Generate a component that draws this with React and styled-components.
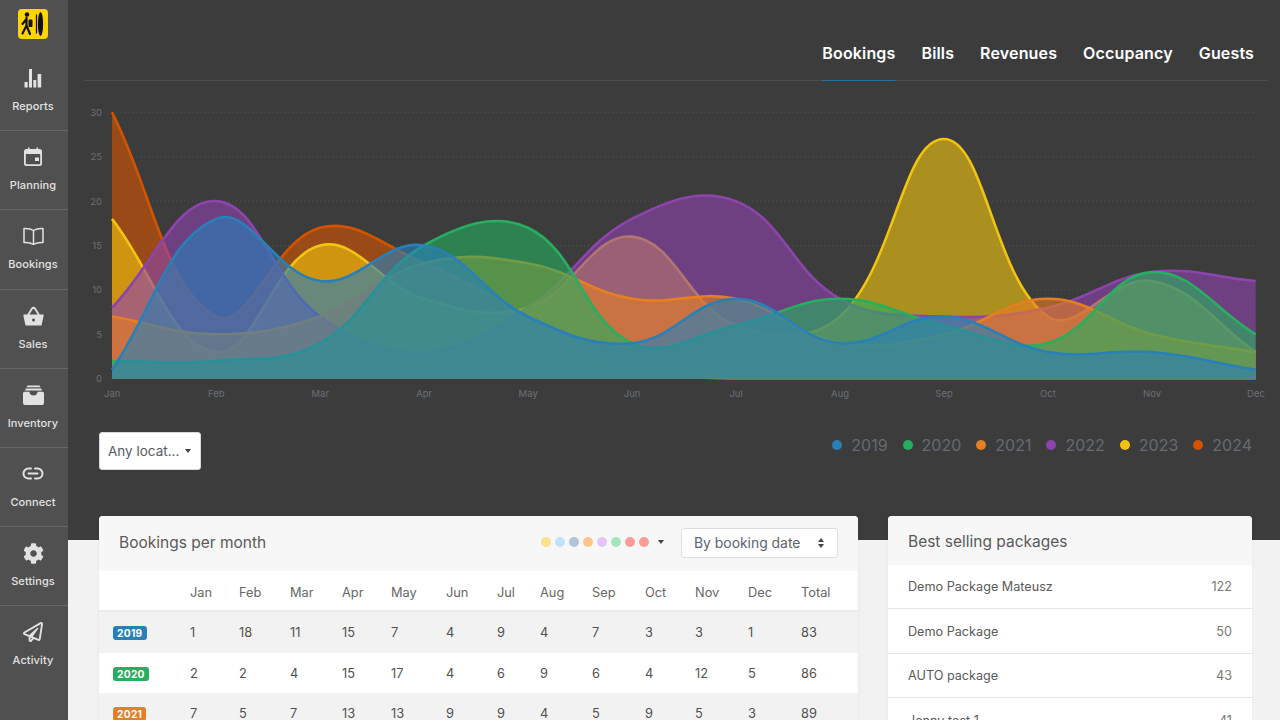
import React from 'react';
import styled, { createGlobalStyle } from 'styled-components';
import { FaCog, FaRegPaperPlane } from 'react-icons/fa';

const Global = createGlobalStyle`
  html, body { margin: 0; padding: 0; height: 720px; overflow: hidden; background: #f2f2f2; }
  body { font-family: Inter, "Liberation Sans", sans-serif; }
  * { box-sizing: border-box; }
`;

const Page = styled.div`display: flex; width: 1280px; height: 720px; overflow: hidden;`;
const Sidebar = styled.nav`width: 68px; flex: none; background: #505050; display: flex; flex-direction: column;`;
const LogoBox = styled.div`height: 52px; display: flex; justify-content: center; padding: 9px 2px 0 0;`;
const NavItem = styled.a`
  height: 79.2px; display: flex; flex-direction: column; align-items: center; padding: 16px 2px 0 0;
  border-bottom: ${p => (p.$last ? 'none' : '1px solid #666')}; color: #e2e2e2; flex: none;
`;
const NavIcon = styled.span`height: 20px; display: flex; align-items: center; justify-content: center; color: #e2e2e2;`;
const NavLabel = styled.span`font-size: 11px; font-weight: 500; margin-top: 11px; line-height: 14px; letter-spacing: 0.1px;`;

const Main = styled.main`flex: 1; min-width: 0; background: linear-gradient(#3c3c3c 540px, #f2f2f2 540px);`;
const TabBar = styled.div`
  height: 81px; margin: 0 12px 0 16px; display: flex; justify-content: flex-end; align-items: stretch; gap: 26px;
  padding-right: 14px; border-bottom: 1px solid #4e4e4e;
`;
const Tab = styled.a`
  display: flex; align-items: center; padding-top: 25px; height: 81px; font-size: 16px; font-weight: 600; color: #fff; letter-spacing: 0.15px;
  border-bottom: 1px solid ${p => (p.$active ? '#2473a8' : 'transparent')};
`;
const ChartSvg = styled.svg`display: block; width: 1212px; height: 330px;`;
const AxisText = styled.text`font-size: 9.5px; fill: #6b7078; font-family: Inter, "Liberation Sans", sans-serif;`;

const Controls = styled.div`height: 105px; padding: 21px 28px 0 31px; display: flex; justify-content: space-between; align-items: flex-start;`;
const LocationButton = styled.button`
  width: 102px; height: 38px; background: #fff; border: 1px solid #d5d9e0; border-radius: 3px; padding: 0 0 1px 8px;
  display: flex; align-items: center; font: 400 13.5px Inter, "Liberation Sans", sans-serif; color: #555b63;
`;
const Caret = styled.span`
  width: 0; height: 0; border-left: 3.5px solid transparent; border-right: 3.5px solid transparent; border-top: 4px solid ${p => p.$c || '#444'};
  margin-left: ${p => p.$ml || 0}px; flex: none;
`;
const Legend = styled.div`display: flex; align-items: center; height: 26px;`;
const LegendItem = styled.div`display: flex; align-items: center; margin-left: 15px; font-size: 16px; color: #656b73;`;
const LegendDot = styled.span`width: 10px; height: 10px; border-radius: 50%; background: ${p => p.$c}; margin-right: 9px;`;

const Cards = styled.div`display: flex; align-items: flex-start; padding-left: 31px; gap: 30px;`;
const Card = styled.section`
  width: ${p => p.$w}px; flex: none; background: #fff; border-radius: 4px; overflow: hidden; box-shadow: 0 1px 4px rgba(0,0,0,.05);
`;
const CardHead = styled.header`
  height: ${p => p.$h}px; background: #f7f7f7; display: flex; align-items: center; justify-content: space-between;
  padding: ${p => p.$pt || 0}px 20px ${p => p.$pb || 0}px;
`;
const CardTitle = styled.h3`margin: 0; font-size: 15.5px; font-weight: 400; color: #5a5a5a;`;
const HeadTools = styled.div`display: flex; align-items: center;`;
const Swatches = styled.div`display: flex; align-items: center; gap: 4px; margin-right: 17px;`;
const Swatch = styled.span`width: 10px; height: 10px; border-radius: 50%; background: ${p => p.$c};`;
const SortSelect = styled.div`
  width: 157px; height: 30px; margin-top: 2px; border: 1px solid #dbe0e7; border-radius: 3px; background: #fff; display: flex; align-items: center; justify-content: space-between;
  padding: 0 13px 0 12px; font-size: 13.9px; color: #5b636e;
`;
const Updown = styled.span`display: flex; flex-direction: column; gap: 2px;`;
const CaretUp = styled.span`width: 0; height: 0; border-left: 3.5px solid transparent; border-right: 3.5px solid transparent; border-bottom: 4px solid #444;`;

const MonthGrid = styled.div`
  display: grid; grid-template-columns: 91px 49px 51px 52px 49px 55px 51px 43px 52px 53px 50px 53px 53px 57px; align-items: center;
  height: ${p => p.$h}px; font-size: 12.8px; color: ${p => (p.$head ? '#666' : '#505050')};
  background: ${p => (p.$odd ? '#f2f2f2' : '#fff')};
  padding-top: ${p => (p.$head ? 3 : 0)}px;
  border-bottom: ${p => (p.$head ? '2px solid #ececec' : 'none')};
`;
const YearCell = styled.div`padding: 1px 0 0 14px; display: flex;`;
const YearBadge = styled.span`
  background: ${p => p.$c}; color: #fff; font-size: 10.2px; font-weight: 700; line-height: 14px; height: 14px; padding: 0 4px; border-radius: 3px; letter-spacing: 0.3px;
`;
const PkgRow = styled.div`
  height: ${p => p.$h}px; display: flex; align-items: center; justify-content: space-between; padding: 0 20px; font-size: 12.65px; color: #5a5a5a;
  border-bottom: 1px solid #e6e6e6;
`;
const PkgCount = styled.span`color: #777;`;

const COLORS = { 2019: '#2980b9', 2020: '#27ae60', 2021: '#e67e22', 2022: '#8e44ad', 2023: '#f1c40f', 2024: '#d35400' };
const MONTHS = ['Jan','Feb','Mar','Apr','May','Jun','Jul','Aug','Sep','Oct','Nov','Dec'];
const SERIES = [
  [2024, [30,7,17,13,7,1,0,0,0,0,0,0]],
  [2023, [18,3,15,9,8,16,6,7,27,7,11,3]],
  [2022, [8,20,7,3,8,18,20,9,7,8,12,11]],
  [2021, [7,5,7,13,13,9,9,4,5,9,5,3]],
  [2020, [2,2,4,15,17,4,6,9,6,4,12,5]],
  [2019, [1,18,11,15,7,4,9,4,7,3,3,1]],
];
const X0 = 112, STEP = 103.97, Y0 = 378.7, UNIT = 8.88, TOP = 112.3;

function spline(values) {
  const pts = values.map((v, i) => ({ x: X0 + i * STEP, y: Y0 - v * UNIT }));
  const t = 0.4;
  const cps = pts.map((c, i) => {
    const p = pts[i - 1] || c, n = pts[i + 1] || c;
    const d1 = Math.hypot(c.x - p.x, c.y - p.y), d2 = Math.hypot(n.x - c.x, n.y - c.y);
    const s1 = d1 / (d1 + d2 || 1), s2 = d2 / (d1 + d2 || 1);
    const cap = y => Math.min(Y0, Math.max(TOP, y));
    return {
      px: c.x - t * s1 * (n.x - p.x), py: cap(c.y - t * s1 * (n.y - p.y)),
      nx: c.x + t * s2 * (n.x - p.x), ny: cap(c.y + t * s2 * (n.y - p.y)),
    };
  });
  let d = `M${pts[0].x} ${pts[0].y}`;
  for (let i = 1; i < pts.length; i++) {
    d += ` C${cps[i-1].nx} ${cps[i-1].ny} ${cps[i].px} ${cps[i].py} ${pts[i].x} ${pts[i].y}`;
  }
  return d;
}

function BookingsChart() {
  return (
    <ChartSvg viewBox="68 81 1212 330">
      {[5,10,15,20,25,30].map(v => (
        <line key={v} x1={X0} x2={X0 + 11 * STEP} y1={Y0 - v * UNIT} y2={Y0 - v * UNIT} stroke="#565656" strokeWidth="1" strokeDasharray="1 3" />
      ))}
      {[0,5,10,15,20,25,30].map(v => (
        <AxisText key={v} x={102} y={Y0 - v * UNIT + 3.5} textAnchor="end">{v}</AxisText>
      ))}
      {MONTHS.map((m, i) => (
        <AxisText key={m} x={X0 + i * STEP + 0.3} y={397} textAnchor="middle">{m}</AxisText>
      ))}
      {SERIES.map(([year, vals]) => {
        const d = spline(vals);
        return (
          <g key={year}>
            <path d={`${d} L${X0 + 11 * STEP} ${Y0} L${X0} ${Y0} Z`} fill={COLORS[year]} fillOpacity="0.62" />
            <path d={d} fill="none" stroke={COLORS[year]} strokeWidth="2.6" />
          </g>
        );
      })}
    </ChartSvg>
  );
}

const Logo = () => (
  <svg width="30" height="30" viewBox="0 0 30 30">
    <rect width="30" height="30" rx="4" fill="#ffd500" />
    <circle cx="9" cy="5.5" r="2.3" fill="#111" />
    <path d="M8.5 8.5 L8.5 16.5 L4.5 24.5 M8.5 16.5 L12 25 M8.5 10 L4.5 15" stroke="#111" strokeWidth="2.2" fill="none" strokeLinecap="round" />
    <rect x="10.5" y="10.5" width="4" height="7.5" rx="1" fill="#111" />
    <line x1="18.5" y1="5.5" x2="18.5" y2="24.5" stroke="#111" strokeWidth="1.3" />
    <ellipse cx="22.5" cy="15" rx="2.6" ry="12" fill="#111" />
  </svg>
);
const ReportsIcon = () => (
  <svg width="18" height="20" viewBox="0 0 18 20" fill="currentColor">
    <rect x="0.5" y="14" width="3.2" height="5.5" /><rect x="5" y="1" width="3" height="18.5" />
    <rect x="9.3" y="12" width="3" height="7.5" /><rect x="13.6" y="6" width="3.6" height="13.5" />
  </svg>
);
const PlanningIcon = () => (
  <svg width="20" height="20" viewBox="0 0 20 20" fill="currentColor">
    <path fillRule="evenodd" d="M3.5 2H5V0.5h1.6V2h6.8V0.5H15V2h1.5A2.5 2.5 0 0 1 19 4.5v12a2.5 2.5 0 0 1-2.5 2.5h-13A2.5 2.5 0 0 1 1 16.5v-12A2.5 2.5 0 0 1 3.5 2zM2.8 7v9.5a.7.7 0 0 0 .7.7h13a.7.7 0 0 0 .7-.7V7z" />
    <rect x="12" y="10.5" width="4" height="3.5" />
  </svg>
);
const BookIcon = () => (
  <svg width="21" height="19" viewBox="0 0 21 19" fill="none" stroke="currentColor" strokeWidth="1.5" strokeLinejoin="round">
    <path d="M10.5 3.5C8 1.8 4.5 1.3 1 1.5V15.5C4.5 15.3 8 15.8 10.5 17.5C13 15.8 16.5 15.3 20 15.5V1.5C16.5 1.3 13 1.8 10.5 3.5ZM10.5 3.5V17.5" />
  </svg>
);
const BasketIcon = () => (
  <svg width="21" height="20" viewBox="0 0 21 20">
    <path d="M5 9L9 2.5Q10.5 1 12 2.5L16 9" fill="none" stroke="currentColor" strokeWidth="1.8" />
    <path d="M0.5 8.5H20.5V10.2L18.5 19.5H2.5L0.5 10.2Z" fill="currentColor" />
    <circle cx="10.5" cy="14" r="1.5" fill="#505050" />
  </svg>
);
const InventoryIcon = () => (
  <svg width="21" height="20" viewBox="0 0 21 20" fill="currentColor">
    <path d="M4.5 0.5H16.5L17.5 2.3H3.5Z" />
    <path d="M2.8 3.5H18.2L19 5.5H2Z" />
    <path d="M1.5 6.8H6.5C6.5 9 8 10.5 10.5 10.5S14.5 9 14.5 6.8H19.5A1.5 1.5 0 0 1 21 8.3V18A2 2 0 0 1 19 20H2A2 2 0 0 1 0 18V8.3A1.5 1.5 0 0 1 1.5 6.8Z" />
  </svg>
);
const LinkIcon = () => (
  <svg width="22" height="13" viewBox="0 0 22 13" fill="none" stroke="currentColor" strokeWidth="2" strokeLinecap="round">
    <path d="M9 1.5H6.5a5 5 0 0 0 0 10H9M13 1.5h2.5a5 5 0 0 1 0 10H13M6.5 6.5H15.5" />
  </svg>
);

const NAV = [
  ['Reports', <ReportsIcon />], ['Planning', <PlanningIcon />], ['Bookings', <BookIcon />], ['Sales', <BasketIcon />],
  ['Inventory', <InventoryIcon />], ['Connect', <LinkIcon />], ['Settings', <FaCog size={21} />], ['Activity', <FaRegPaperPlane size={20} />],
];
const TABLE = [
  [2019, [1,18,11,15,7,4,9,4,7,3,3,1,83], 41],
  [2020, [2,2,4,15,17,4,6,9,6,4,12,5,86], 40],
  [2021, [7,5,7,13,13,9,9,4,5,9,5,3,89], 41],
];
const PASTEL = ['#fde08b','#bfe3fb','#b3c4d6','#fcc48f','#e3c5f5','#a5e6bd','#fc9b97','#fc9b97'];
const PACKAGES = [['Demo Package Mateusz',122,44],['Demo Package',50,45],['AUTO package',43,44],['Jenny test 1',41,46]];

export default function App() {
  return (
    <Page>
      <Global />
      <Sidebar>
        <LogoBox><Logo /></LogoBox>
        {NAV.map(([label, icon], i) => (
          <NavItem key={label} $last={i === NAV.length - 1}>
            <NavIcon>{icon}</NavIcon>
            <NavLabel>{label}</NavLabel>
          </NavItem>
        ))}
      </Sidebar>
      <Main>
        <TabBar>
          {['Bookings','Bills','Revenues','Occupancy','Guests'].map((t, i) => <Tab key={t} $active={i === 0}>{t}</Tab>)}
        </TabBar>
        <BookingsChart />
        <Controls>
          <LocationButton>Any locat...<Caret $ml={6} /></LocationButton>
          <Legend>
            {Object.keys(COLORS).map(y => (
              <LegendItem key={y}><LegendDot $c={COLORS[y]} />{y}</LegendItem>
            ))}
          </Legend>
        </Controls>
        <Cards>
          <Card $w={759}>
            <CardHead $h={55} $pb={3}>
              <CardTitle>Bookings per month</CardTitle>
              <HeadTools>
                <Swatches>{PASTEL.map((c, i) => <Swatch key={i} $c={c} />)}<Caret $ml={5} /></Swatches>
                <SortSelect>By booking date<Updown><CaretUp /><Caret /></Updown></SortSelect>
              </HeadTools>
            </CardHead>
            <MonthGrid $head $h={41}>
              <div />
              {MONTHS.map(m => <div key={m}>{m}</div>)}
              <div>Total</div>
            </MonthGrid>
            {TABLE.map(([year, cells, h], i) => (
              <MonthGrid key={year} $h={h} $odd={i % 2 === 0}>
                <YearCell><YearBadge $c={COLORS[year]}>{year}</YearBadge></YearCell>
                {cells.map((c, j) => <div key={j}>{c}</div>)}
              </MonthGrid>
            ))}
          </Card>
          <Card $w={364}>
            <CardHead $h={49} $pt={1}><CardTitle>Best selling packages</CardTitle></CardHead>
            {PACKAGES.map(([name, n, h]) => (
              <PkgRow key={name} $h={h}>{name}<PkgCount>{n}</PkgCount></PkgRow>
            ))}
          </Card>
        </Cards>
      </Main>
    </Page>
  );
}
